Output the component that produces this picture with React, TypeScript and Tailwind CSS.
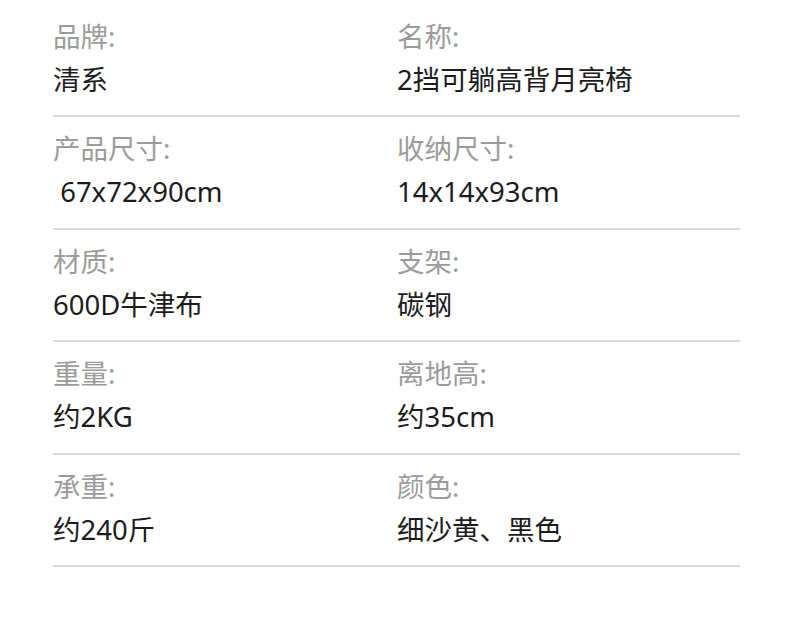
const specs: [string, string, string, string][] = [
  ["品牌:", "清系", "名称:", "2挡可躺高背月亮椅"],
  ["产品尺寸:", " 67x72x90cm", "收纳尺寸:", "14x14x93cm"],
  ["材质:", "600D牛津布", "支架:", "碳钢"],
  ["重量:", "约2KG", "离地高:", "约35cm"],
  ["承重:", "约240斤", "颜色:", "细沙黄、黑色"],
];

function Cell({ label, value }: { label: string; value: string }) {
  return (
    <div className="pt-[14px]">
      <div className="h-[36px] text-[27.5px] leading-[36px] text-[#9b9b9b]">{label}</div>
      <div className="mt-[5px] h-[40px] whitespace-pre text-[27.5px] leading-[40px] text-[#1c1c1c]">
        {value}
      </div>
    </div>
  );
}

export default function App() {
  return (
    <div
      className="h-[640px] w-[790px] bg-white pl-[53px] pr-[50px] pt-[4.5px]"
      style={{ fontFamily: '"Noto Sans", "Noto Sans CJK SC", sans-serif' }}
    >
      {specs.map(([l1, v1, l2, v2]) => (
        <div
          key={l1}
          className="grid h-[112.5px] grid-cols-[344px_1fr] border-b-2 border-[#d9d9d9]"
        >
          <Cell label={l1} value={v1} />
          <Cell label={l2} value={v2} />
        </div>
      ))}
    </div>
  );
}
